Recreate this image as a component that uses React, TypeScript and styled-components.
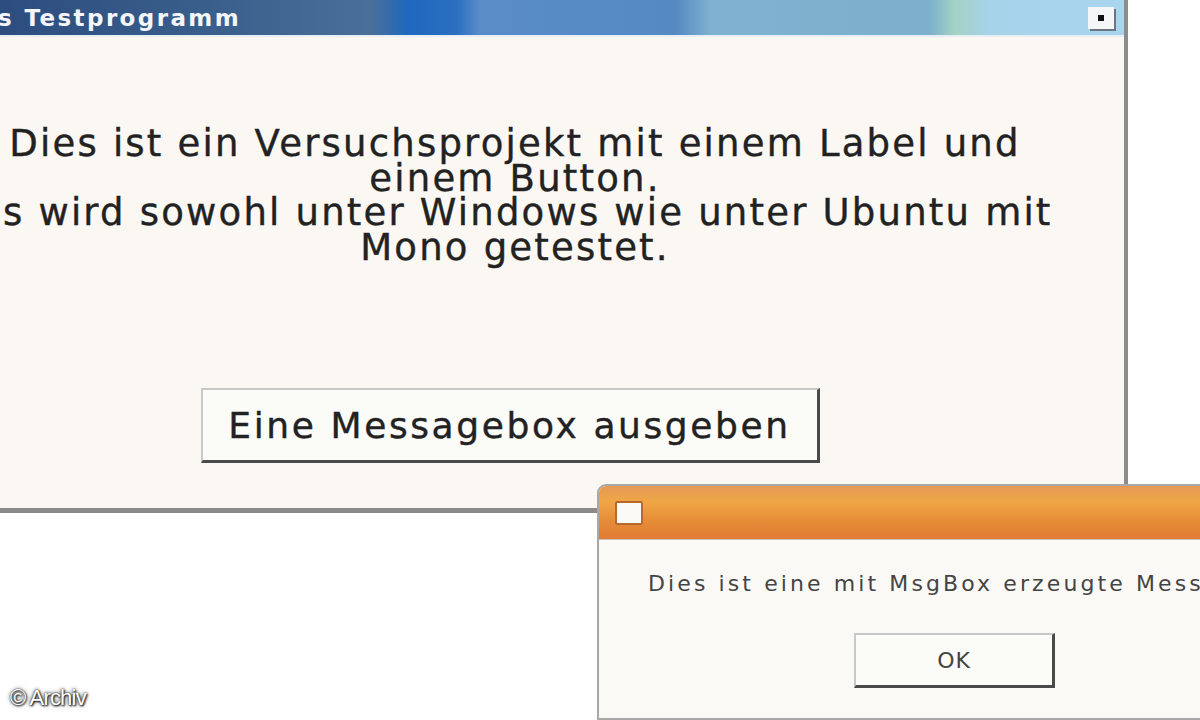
import React from 'react';
import styled, {createGlobalStyle} from 'styled-components';

const GlobalStyle = createGlobalStyle`
    html, body {
        margin: 0;
        padding: 0;
        background: #ffffff;
        overflow: hidden;
    }
`;

const Desktop = styled.div`
    position: relative;
    width: 1200px;
    height: 720px;
    overflow: hidden;
    background: #ffffff;
    font-family: 'DejaVu Sans', Verdana, sans-serif;
`;

const MainWindow = styled.div`
    display: flex;
    flex-direction: column;
    width: 1214px;
    height: 508px;
    margin-left: -90px;
    background: #fbf8f3;
    border-right: 4px solid #8c8c8c;
    border-bottom: 5px solid #8a8a8a;
`;

const TitleBar = styled.div`
    display: flex;
    align-items: center;
    height: 35px;
    flex-shrink: 0;
    padding-left: 88px;
    padding-right: 10px;
    background: linear-gradient(
        90deg,
        #27457a 0%,
        #3a5f8c 25%,
        #4a6f98 38%,
        #1f68bf 41%,
        #2a6fc0 45%,
        #5a8dc8 47%,
        #5489c2 63%,
        #7fb1d0 66%,
        #7db0cd 84%,
        #a3d2c4 86%,
        #a6d3ea 89%,
        #a9d6ee 100%
    );
    border-bottom: 2px solid #e8eef4;
`;

const Title = styled.span`
    color: #f4f6fa;
    font-weight: bold;
    font-size: 23px;
    letter-spacing: 2.4px;
`;

const CloseButton = styled.div`
    display: flex;
    align-items: center;
    justify-content: center;
    margin-left: auto;
    width: 26px;
    height: 22px;
    background: #f4f6f8;
    box-shadow: 2px 2px 0 #6d7680;

    &::after {
        content: '';
        width: 6px;
        height: 6px;
        background: #111;
    }
`;

const Content = styled.div`
    display: flex;
    flex-direction: column;
    align-items: center;
    flex: 1;
`;

const Label = styled.div`
    margin-top: 90px;
    font-size: 37px;
    line-height: 34.5px;
    letter-spacing: 2.2px;
    color: #222;
    text-align: center;
    white-space: nowrap;
    -webkit-text-stroke: 0.4px #222;
    transform: translateX(-2px);
`;

const Button = styled.div<{$w: number; $h: number; $size: number; $spacing: number; $color: string}>`
    display: flex;
    align-items: center;
    justify-content: center;
    width: ${p => p.$w}px;
    height: ${p => p.$h}px;
    box-sizing: border-box;
    background: #fbfbf8;
    border-top: 2px solid #c8c8c8;
    border-left: 2px solid #c8c8c8;
    border-right: 3px solid #4a4a4a;
    border-bottom: 3px solid #4a4a4a;
    font-size: ${p => p.$size}px;
    letter-spacing: ${p => p.$spacing}px;
    color: ${p => p.$color};
`;

const MainButton = styled(Button)`
    margin-top: 123px;
    transform: translateX(-7px);
    -webkit-text-stroke: 0.4px #222;
`;

const MsgBox = styled.div`
    position: absolute;
    left: 597px;
    top: 484px;
    width: 700px;
    height: 232px;
    display: flex;
    flex-direction: column;
    border: 2px solid #a8a8a8;
    border-top-left-radius: 9px;
    background: #fbf9f5;
    overflow: hidden;
`;

const MsgTitle = styled.div`
    display: flex;
    align-items: center;
    height: 53px;
    flex-shrink: 0;
    padding-left: 16px;
    background: linear-gradient(180deg, #e39a55 0%, #f0a645 30%, #e58d38 65%, #e07a32 100%);
    border-bottom: 1px solid #c9c2b8;
`;

const MsgIcon = styled.div`
    width: 24px;
    height: 20px;
    background: #fbfaf6;
    border: 2px solid #b8682c;
    border-radius: 2px;
`;

const MsgBody = styled.div`
    display: flex;
    flex-direction: column;
    padding-left: 49px;
`;

const MsgText = styled.div`
    margin-top: 31px;
    font-size: 22px;
    letter-spacing: 3.1px;
    color: #444;
    white-space: nowrap;
`;

const OkButton = styled(Button)`
    margin-top: 37px;
    margin-left: 206px;
`;

const Watermark = styled.div`
    position: absolute;
    left: 10px;
    bottom: 9px;
    font-family: 'Liberation Sans', Arial, sans-serif;
    font-size: 22px;
    letter-spacing: -0.8px;
    color: #ffffff;
    text-shadow: 0 0 2px #222, 0 0 4px #444, 1px 1px 2px #000;
`;

export default function App() {
    return (
        <Desktop>
            <GlobalStyle />
            <MainWindow>
                <TitleBar>
                    <Title>s Testprogramm</Title>
                    <CloseButton />
                </TitleBar>
                <Content>
                    <Label>
                        Dies ist ein Versuchsprojekt mit einem Label und
                        <br />
                        einem Button.
                        <br />
                        Es wird sowohl unter Windows wie unter Ubuntu mit
                        <br />
                        Mono getestet.
                    </Label>
                    <MainButton $w={619} $h={75} $size={36} $spacing={2.6} $color="#222">
                        Eine Messagebox ausgeben
                    </MainButton>
                </Content>
            </MainWindow>
            <MsgBox>
                <MsgTitle>
                    <MsgIcon />
                </MsgTitle>
                <MsgBody>
                    <MsgText>Dies ist eine mit MsgBox erzeugte Messagebox.</MsgText>
                    <OkButton $w={201} $h={55} $size={22} $spacing={1} $color="#444">
                        OK
                    </OkButton>
                </MsgBody>
            </MsgBox>
            <Watermark>© Archiv</Watermark>
        </Desktop>
    );
}
